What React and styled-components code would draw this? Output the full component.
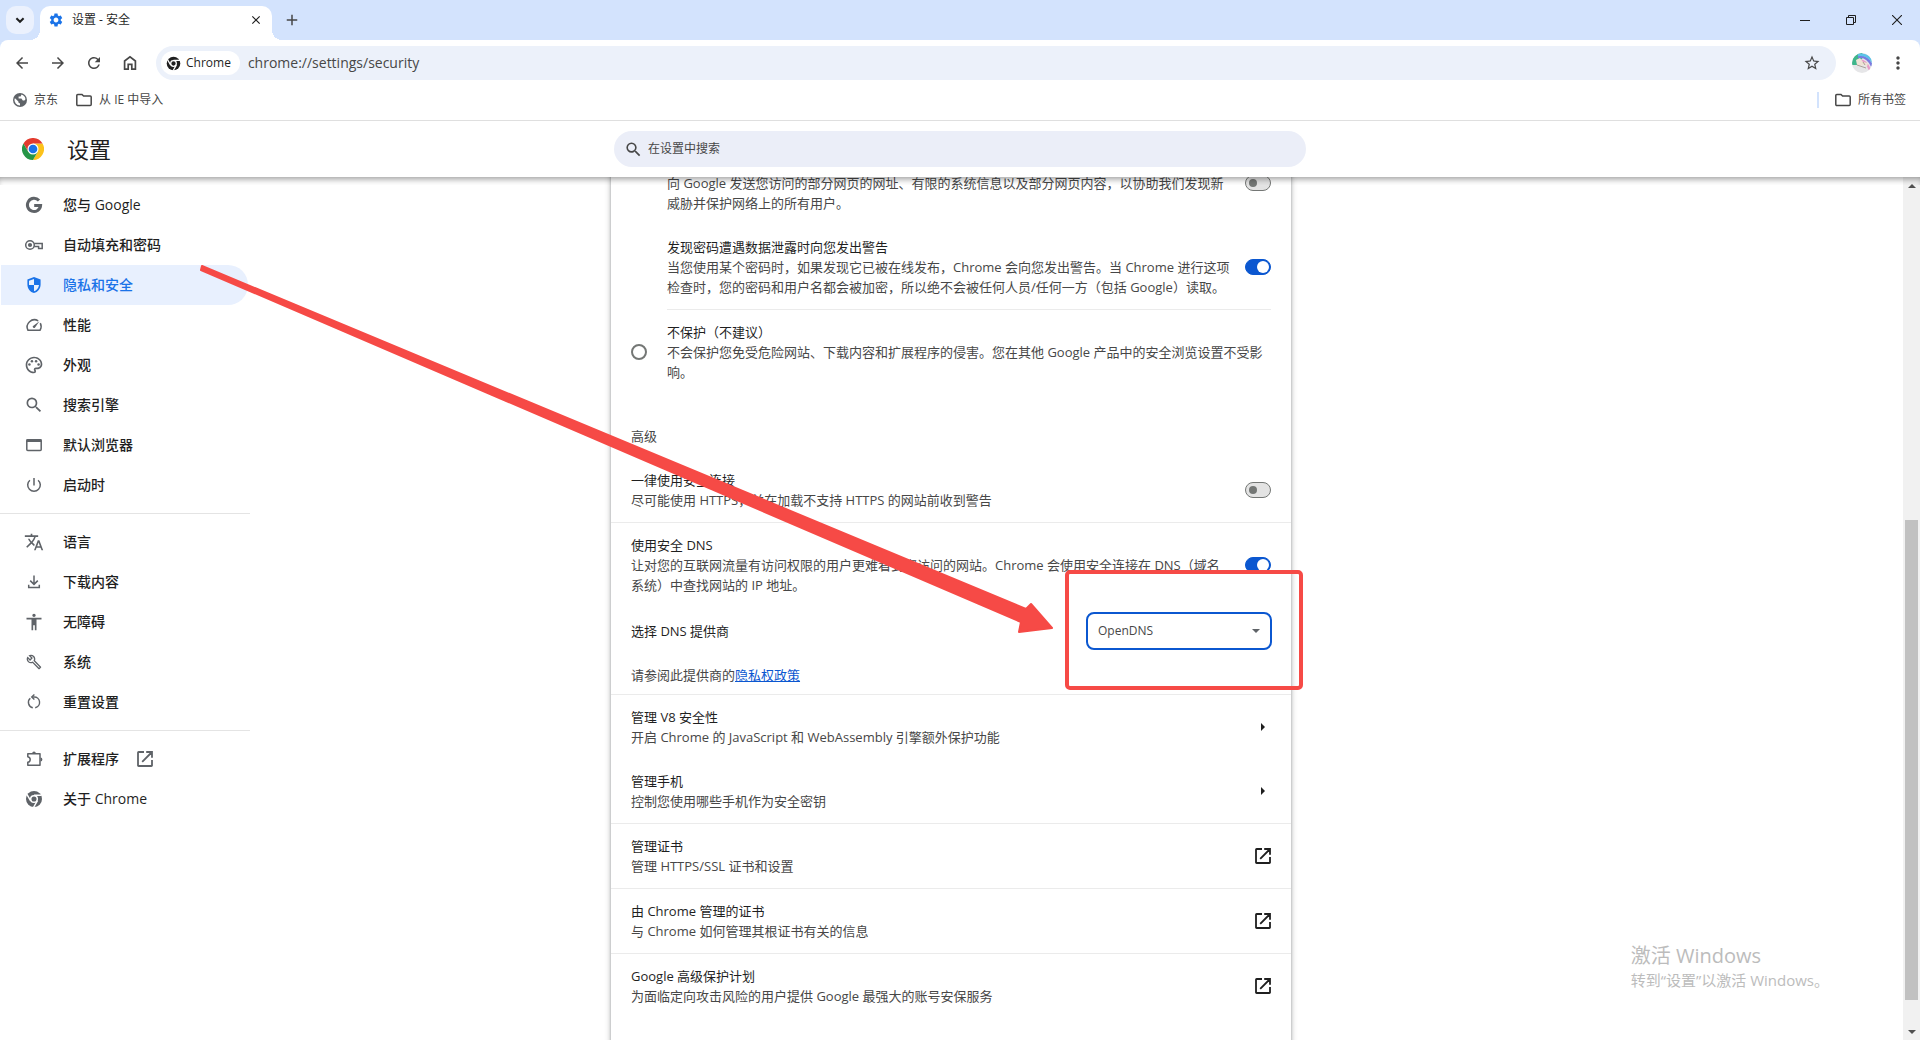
import React from "react";
import styled, { createGlobalStyle, css } from "styled-components";
import {
  MdAccessibility,
  MdAdd,
  MdArrowBack,
  MdArrowForward,
  MdClose,
  MdMoreVert,
  MdOutlineBuild,
  MdOutlinePalette,
  MdRefresh,
  MdSearch,
  MdSettings,
  MdStarBorder,
  MdTranslate,
} from "react-icons/md";

const GlobalStyle = createGlobalStyle`
  *, *::before, *::after { box-sizing: border-box; }
  html, body { margin: 0; padding: 0; }
  body {
    background: #fff;
    color: #1f1f1f;
    font-family: "Open Sans", "Noto Sans CJK SC", sans-serif;
    font-size: 13px;
    line-height: 20px;
    overflow: hidden;
  }
  button, input, select { font: inherit; color: inherit; margin: 0; }
  svg { display: block; flex: none; }
`;

const colors = {
  strip: "#d3e3fd",
  field: "#ecf1fa",
  primary: "#0b57d0",
  icon: "#5f6368",
  toolbarIcon: "#474747",
  secondary: "#474747",
  line: "#ebebeb",
  mark: "#f64a46",
};

const Window = styled.div`
  position: relative;
  height: 100vh;
  display: flex;
  flex-direction: column;
  overflow: hidden;
`;

/* ---------- browser frame ---------- */

const TabStrip = styled.header`
  display: flex;
  align-items: flex-end;
  height: 40px;
  background: ${colors.strip};
  padding-left: 6px;
`;

const PlainButton = styled.button`
  display: grid;
  place-items: center;
  border: 0;
  padding: 0;
  background: transparent;
  cursor: pointer;
`;

const TabSearchButton = styled(PlainButton)`
  align-self: center;
  width: 28px;
  height: 28px;
  border-radius: 10px;
  background: #ebf1fd;
`;

const Tab = styled.div`
  display: flex;
  align-items: center;
  gap: 8px;
  width: 232px;
  height: 34px;
  margin-left: 6px;
  padding: 0 8px 6px;
  background: #fff;
  border-radius: 10px 10px 0 0;
  position: relative;
  font-size: 12px;

  &::before,
  &::after {
    content: "";
    position: absolute;
    bottom: 0;
    width: 10px;
    height: 10px;
  }
  &::before {
    right: 100%;
    background: radial-gradient(circle at 0 0, transparent 10px, #fff 10px);
  }
  &::after {
    left: 100%;
    background: radial-gradient(circle at 100% 0, transparent 10px, #fff 10px);
  }
`;

const TabTitle = styled.span`
  flex: 1;
`;

const TabIconButton = styled(PlainButton)`
  width: 16px;
  height: 16px;
`;

const NewTabButton = styled(PlainButton)`
  align-self: center;
  width: 28px;
  height: 28px;
  margin-left: 6px;
`;

const WindowButtons = styled.div`
  display: flex;
  align-self: stretch;
  margin-left: auto;
`;

const WindowButton = styled(PlainButton)`
  width: 46px;
`;

const ToolbarBack = styled.div`
  background: ${colors.strip};
`;

const Toolbar = styled.div`
  display: flex;
  align-items: center;
  height: 46px;
  padding: 0 4px;
  background: #fff;
  border-radius: 8px 8px 0 0;
  color: ${colors.toolbarIcon};
`;

const NavButton = styled(PlainButton)`
  width: 36px;
  height: 34px;
`;

const Omnibox = styled.div`
  flex: 1;
  display: flex;
  align-items: center;
  height: 34px;
  margin: 0 8px;
  padding: 0 6px 0 5px;
  border-radius: 17px;
  background: ${colors.field};
`;

const SiteChip = styled.button`
  display: flex;
  align-items: center;
  gap: 4px;
  height: 24px;
  padding: 0 9px 0 4px;
  border: 0;
  border-radius: 12px;
  background: #fff;
  color: #1f1f1f;
  font-size: 12px;
`;

const UrlInput = styled.input`
  flex: 1;
  border: 0;
  outline: 0;
  padding: 0 8px;
  background: transparent;
  color: ${colors.secondary};
  font-size: 14px;
`;

const Bookmarks = styled.nav`
  display: flex;
  align-items: center;
  height: 35px;
  padding: 0 14px 6px 13px;
  border-bottom: 1px solid #dfdfdf;
  color: ${colors.toolbarIcon};
`;

const Bookmark = styled.a`
  display: flex;
  align-items: center;
  gap: 7px;
  margin-right: 18px;
  color: ${colors.secondary};
  font-size: 12px;
  text-decoration: none;

  &:last-child {
    margin-right: 0;
  }
`;

const BookmarkDivider = styled.span`
  width: 2px;
  height: 16px;
  margin: 0 16px 0 auto;
  background: ${colors.strip};
`;

/* ---------- settings page ---------- */

const SettingsHeader = styled.header`
  position: relative;
  z-index: 1;
  display: grid;
  grid-template-columns: 1fr 692px 1fr;
  align-items: center;
  height: 56px;
  flex: none;
  background: #fff;

  &::after {
    content: "";
    position: absolute;
    top: 100%;
    left: 0;
    right: 0;
    height: 8px;
    box-shadow: inset 0 5px 6px -3px rgba(0, 0, 0, 0.4);
    pointer-events: none;
  }
`;

const Brand = styled.div`
  display: flex;
  align-items: center;
  gap: 23px;
  padding-left: 22px;
`;

const PageTitle = styled.h1`
  margin: 0;
  font-size: 22px;
  font-weight: 400;
  line-height: 28px;
`;

const SearchBox = styled.label`
  display: flex;
  align-items: center;
  gap: 5px;
  height: 36px;
  padding: 0 10px;
  border-radius: 18px;
  background: #ebeef8;
  color: ${colors.toolbarIcon};
`;

const SearchInput = styled.input`
  flex: 1;
  border: 0;
  outline: 0;
  padding: 0;
  background: transparent;
  font-size: 12px;

  &::placeholder {
    color: ${colors.secondary};
    opacity: 1;
  }
`;

const Body = styled.div`
  flex: 1;
  min-height: 0;
  display: flex;
`;

const Sidebar = styled.nav`
  width: 250px;
  flex: none;
  padding-top: 8px;
`;

const MenuGroup = styled.div`
  padding-bottom: 8px;

  & + & {
    padding-top: 8px;
    border-top: 1px solid #e4e4e4;
  }
`;

const MenuItem = styled.a`
  display: flex;
  align-items: center;
  gap: 18px;
  height: 40px;
  margin: 0 2px 0 1px;
  padding-left: 22px;
  border-radius: 0 20px 20px 0;
  color: #1f1f1f;
  font-size: 14px;
  font-weight: 500;
  text-decoration: none;

  svg {
    color: ${colors.icon};
  }

  ${(p) =>
    p.$selected &&
    css`
      background: #e8f0fe;
      color: #1a73e8;
      svg {
        color: #1a73e8;
      }
    `}
`;

const IconSlot = styled.span`
  display: grid;
  place-items: center;
  width: 22px;
  flex: none;
`;

const Content = styled.main`
  flex: 1;
  min-width: 0;
  overflow: hidden;
  margin-left: -250px;
  padding-right: 1px;
  display: flex;
  justify-content: center;
  pointer-events: none;
`;

const Card = styled.section`
  width: 680px;
  height: 1000px;
  margin-top: -4px;
  background: #fff;
  box-shadow: 0 1px 2px rgba(60, 64, 67, 0.3), 0 1px 5px 1px rgba(60, 64, 67, 0.3);
  pointer-events: auto;
`;

const Row = styled.div`
  display: flex;
  align-items: center;
  gap: 20px;
  margin-left: ${(p) => (p.$nested ? 56 : 0)}px;
  margin-right: ${(p) => (p.$nested ? 20 : 0)}px;
  padding: 12px ${(p) => (p.$nested ? 0 : 20)}px;
  padding-top: ${(p) => (p.$cut ? 0 : 12)}px;
  border-bottom: ${(p) => (p.$line ? 1 : 0)}px solid ${colors.line};
`;

const FieldRow = styled(Row)`
  height: ${(p) => (p.$short ? 40 : 48)}px;
  padding-top: 0;
  padding-bottom: 0;
`;

const TextBlock = styled.div`
  flex: 1;
  min-width: 0;
`;

const Label = styled.label`
  display: block;
  color: #1f1f1f;
`;

const Note = styled.div`
  color: ${colors.secondary};
`;

const Lines = styled.span`
  display: block;
  white-space: nowrap;
`;

const SectionTitle = styled.h2`
  margin: 20px 20px 0;
  font-size: 13px;
  font-weight: 400;
  line-height: 44px;
  color: ${colors.secondary};
`;

const Switch = styled.input.attrs({ type: "checkbox", role: "switch" })`
  appearance: none;
  flex: none;
  display: flex;
  align-items: center;
  width: 26px;
  height: 16px;
  padding: 0 3px;
  border: 1px solid #747775;
  border-radius: 8px;
  background: #e3e3e3;
  align-self: ${(p) => (p.$top ? "flex-start" : "center")};
  margin-top: ${(p) => (p.$top ? 2 : 0)}px;

  &::before {
    content: "";
    width: 8px;
    height: 8px;
    border-radius: 50%;
    background: #747775;
  }
  &:checked {
    justify-content: flex-end;
    padding: 0 1px;
    border-color: ${colors.primary};
    background: ${colors.primary};
  }
  &:checked::before {
    width: 12px;
    height: 12px;
    background: #fff;
  }
`;

const Radio = styled.input.attrs({ type: "radio" })`
  appearance: none;
  flex: none;
  width: 16px;
  height: 16px;
  border: 2px solid #747775;
  border-radius: 50%;
  background: #fff;
`;

const SelectBox = styled.div`
  display: grid;
  grid-template-columns: 1fr 20px;
  align-items: center;
  width: 186px;
  height: 38px;
  margin-right: -1px;

  svg {
    grid-area: 1 / 2;
    margin-right: 12px;
    pointer-events: none;
  }
`;

const Select = styled.select`
  appearance: none;
  grid-area: 1 / 1 / 2 / 3;
  height: 38px;
  padding: 0 10px;
  border: 2px solid ${colors.primary};
  border-radius: 8px;
  background: #fff;
  color: ${colors.secondary};
  font-size: 12px;
`;

const PolicyLink = styled.a`
  color: ${colors.primary};
`;

const RowButton = styled(PlainButton)`
  width: 16px;
  height: 16px;
`;

const Scrollbar = styled.div`
  display: flex;
  flex-direction: column;
  width: 17px;
  flex: none;
  padding: 0 2px;
  background: #f1f1f1;
`;

const ScrollArrow = styled.div`
  display: grid;
  place-items: center;
  height: 17px;
  color: #505050;
`;

const ScrollPart = styled.div`
  flex: ${(p) => p.$size} 1 0;
  background: ${(p) => (p.$thumb ? "#c1c1c1" : "transparent")};
`;

/* ---------- overlays ---------- */

const ActivationNotice = styled.aside`
  position: absolute;
  right: 91px;
  bottom: 49px;
  color: #bcbcbc;
  font-size: 15px;
  line-height: 22px;
`;

const ActivationTitle = styled.div`
  font-size: 20px;
  line-height: 26px;
`;

const Highlight = styled.div`
  position: absolute;
  left: 1065px;
  top: 570px;
  width: 238px;
  height: 120px;
  border: 4px solid ${colors.mark};
  border-radius: 5px;
  pointer-events: none;
`;

const Pointer = styled.svg`
  position: absolute;
  left: 200px;
  top: 260px;
  pointer-events: none;
`;

/* ---------- icons ---------- */

const Glyph = ({ size = 20, box = "0 0 20 20", children }) => (
  <svg width={size} height={size} viewBox={box} fill="none" stroke="currentColor" strokeWidth="1.5" aria-hidden="true">
    {children}
  </svg>
);

const GoogleIcon = () => (
  <Glyph>
    <path d="M15 5.6A6.6 6.6 0 1 0 16.6 10.4H10.2" strokeWidth="3" />
  </Glyph>
);

const KeyIcon = () => (
  <Glyph>
    <circle cx="6" cy="10" r="4.3" />
    <circle cx="6" cy="10" r="2.1" fill="currentColor" stroke="none" />
    <path d="M10.2 8.4H18.2V13.4H14.6V11.6H10.2" />
  </Glyph>
);

const ShieldIcon = () => (
  <Glyph>
    <path
      fill="currentColor"
      stroke="none"
      fillRule="evenodd"
      d="M10 2 3.4 4.6V9.4C3.4 13.6 6.2 17 10 18 13.8 17 16.6 13.6 16.6 9.4V4.6ZM10 3.9V10H15C14.6 13 12.6 15.5 10 16.3V10H5V5.8Z"
    />
  </Glyph>
);

const GaugeIcon = () => (
  <Glyph>
    <path d="M14.2 5.9A7.2 7.2 0 0 0 4 15.3H16A7.2 7.2 0 0 0 16.3 8.2" />
    <path d="M8.7 11.3 15.4 6.2 10.9 12.8A1.5 1.5 0 0 1 8.7 11.3Z" fill="currentColor" stroke="none" />
  </Glyph>
);

const BrowserIcon = () => (
  <Glyph>
    <rect x="2.8" y="4.8" width="14.4" height="10.6" rx="1" />
    <path d="M2.5 5.6H17.5" strokeWidth="2.8" />
  </Glyph>
);

const PowerIcon = () => (
  <Glyph>
    <path d="M10 3V10.4M5.9 5.2A6.3 6.3 0 1 0 14.1 5.2" />
  </Glyph>
);

const DownloadIcon = () => (
  <Glyph>
    <path d="M10 3.6V12M6.2 8.6 10 12.4 13.8 8.6M4.7 12.8V15.6H15.3V12.8" />
  </Glyph>
);

const ResetIcon = () => (
  <Glyph>
    <path d="M6.3 6.3A5.4 5.4 0 0 0 8.8 15.7M11.2 15.7A5.4 5.4 0 0 0 10 5H8" strokeWidth="1.4" />
    <path d="M10.4 2.4 7.7 5 10.4 7.6" strokeWidth="1.4" />
  </Glyph>
);

const PuzzleIcon = () => (
  <Glyph>
    <path d="M3.8 4.7H16V16.3H3.8V13.3Q6.2 12.9 6.2 10.5T3.8 7.7Z" strokeLinejoin="round" />
    <path d="M8.2 4.2A1.8 1.8 0 0 1 11.8 4.2ZM16.5 8.6A1.9 1.9 0 0 1 16.5 12.4Z" fill="currentColor" stroke="none" />
  </Glyph>
);

const LaunchIcon = () => (
  <Glyph size={16} box="0 0 16 16">
    <path d="M7 1H1.6A.6.6 0 0 0 1 1.6V14.4A.6.6 0 0 0 1.6 15H14.4A.6.6 0 0 0 15 14.4V9M9.2 1H15V6.8M15 1 5.2 10.8" strokeWidth="1.8" />
  </Glyph>
);

const ChromeMono = ({ size = 20 }) => (
  <Glyph size={size}>
    <circle cx="10" cy="10" r="8" fill="currentColor" stroke="none" />
    <circle cx="10" cy="10" r="3.3" stroke="#fff" strokeWidth="1.5" />
    <path d="M10 6.2H17.6M6.7 11.9 2.9 5.3M13.3 11.9 9.5 18.5" stroke="#fff" strokeWidth="1.5" />
  </Glyph>
);

const ChromeLogo = () => (
  <svg width="22" height="22" viewBox="0 0 48 48" aria-hidden="true">
    <path fill="#fcc21b" d="M24 12H44.8A24 24 0 0 1 24 48L34.4 30Z" />
    <path fill="#e33b2e" d="M3.2 12A24 24 0 0 1 44.8 12H24L13.6 30Z" />
    <path fill="#269547" d="M3.2 12 13.6 30H34.4L24 48A24 24 0 0 1 3.2 12Z" />
    <circle cx="24" cy="24" r="12" fill="#fff" />
    <circle cx="24" cy="24" r="9.5" fill="#1a73e8" />
  </svg>
);

const ChevronIcon = () => (
  <Glyph size={16} box="0 0 16 16">
    <path d="M4.4 6.2 8 9.8 11.6 6.2" strokeWidth="2" />
  </Glyph>
);

const HomeIcon = () => (
  <Glyph>
    <path d="M4.6 16.2V8L10 3.8 15.4 8V16.2H11.8V11.4H8.2V16.2Z" strokeWidth="1.7" />
  </Glyph>
);

const FolderIcon = () => (
  <Glyph size={16} box="0 0 16 16">
    <path d="M.8 3.4A1 1 0 0 1 1.8 2.4H6L7.6 4H14.2A1 1 0 0 1 15.2 5V12.6A1 1 0 0 1 14.2 13.6H1.8A1 1 0 0 1 .8 12.6Z" />
  </Glyph>
);

const GlobeIcon = () => (
  <Glyph size={14} box="1 1 14 14">
    <circle cx="8" cy="8" r="7" fill="#5f6368" stroke="none" />
    <path
      d="M3 6.2 6.4 9.4V10.6L8 11.6V13.6A5.6 5.6 0 0 1 2.5 7ZM9.5 2.6 8.6 4.4H6.6V6.4H9.4L10.8 8.6H12.4L13.5 7.2A5.6 5.6 0 0 0 9.5 2.6Z"
      fill="#fff"
      stroke="none"
    />
  </Glyph>
);

const Avatar = () => (
  <svg width="20" height="20" viewBox="0 0 20 20" aria-hidden="true">
    <defs>
      <clipPath id="avatar">
        <circle cx="10" cy="10" r="10" />
      </clipPath>
    </defs>
    <g clipPath="url(#avatar)">
      <rect width="20" height="20" fill="#e6e6e8" />
      <path d="M0 12A10 10 0 0 1 10 0L12 3 5 12Z" fill="#3fb68b" />
      <g fill="none" strokeWidth="2.4">
        <path d="M5 8Q13 5 18 17" stroke="#e79bc8" />
        <path d="M6 4Q15 2 20 13" stroke="#7a7be0" />
        <path d="M6 2Q16 0 22 11" stroke="#5cc3e8" />
      </g>
      <path d="M4 7 8 5 11 9 16 10 15 14 12 12 8 13 5 12Z" fill="#efe3d6" />
      <path d="M5 12 14 15M11 9 13 12" stroke="#9b8e86" strokeWidth=".8" />
    </g>
  </svg>
);

const Triangle = ({ points, width, height, color = "currentColor" }) => (
  <svg width={width} height={height} viewBox={`0 0 ${width} ${height}`} aria-hidden="true">
    <polygon points={points} fill={color} />
  </svg>
);

/* ---------- data ---------- */

const menu = [
  [
    { text: "您与 Google", icon: <GoogleIcon /> },
    { text: "自动填充和密码", icon: <KeyIcon /> },
    { text: "隐私和安全", icon: <ShieldIcon />, selected: true },
    { text: "性能", icon: <GaugeIcon /> },
    { text: "外观", icon: <MdOutlinePalette size={20} /> },
    { text: "搜索引擎", icon: <MdSearch size={20} /> },
    { text: "默认浏览器", icon: <BrowserIcon /> },
    { text: "启动时", icon: <PowerIcon /> },
  ],
  [
    { text: "语言", icon: <MdTranslate size={20} /> },
    { text: "下载内容", icon: <DownloadIcon /> },
    { text: "无障碍", icon: <MdAccessibility size={20} /> },
    { text: "系统", icon: <MdOutlineBuild size={16} /> },
    { text: "重置设置", icon: <ResetIcon /> },
  ],
  [
    { text: "扩展程序", icon: <PuzzleIcon />, external: true },
    { text: "关于 Chrome", icon: <ChromeMono /> },
  ],
];

const links = [
  { title: "管理 V8 安全性", note: "开启 Chrome 的 JavaScript 和 WebAssembly 引擎额外保护功能" },
  { title: "管理手机", note: "控制您使用哪些手机作为安全密钥", line: true },
  { title: "管理证书", note: "管理 HTTPS/SSL 证书和设置", external: true, line: true },
  { title: "由 Chrome 管理的证书", note: "与 Chrome 如何管理其根证书有关的信息", external: true, line: true },
  { title: "Google 高级保护计划", note: "为面临定向攻击风险的用户提供 Google 最强大的账号安保服务", external: true },
];

const NoteLines = ({ lines }) => (
  <Note>
    {lines.map((line) => (
      <Lines key={line}>{line}</Lines>
    ))}
  </Note>
);

function BrowserFrame() {
  return (
    <>
      <TabStrip>
        <TabSearchButton aria-label="搜索标签页">
          <ChevronIcon />
        </TabSearchButton>
        <Tab>
          <MdSettings size={16} color="#1a73e8" />
          <TabTitle>设置 - 安全</TabTitle>
          <TabIconButton aria-label="关闭标签页">
            <MdClose size={14} />
          </TabIconButton>
        </Tab>
        <NewTabButton aria-label="新标签页">
          <MdAdd size={18} color="#474747" />
        </NewTabButton>
        <WindowButtons>
          <WindowButton aria-label="最小化">
            <Glyph size={10} box="0 0 10 10"><path d="M0 5.5H10" strokeWidth="1" /></Glyph>
          </WindowButton>
          <WindowButton aria-label="还原">
            <Glyph size={10} box="0 0 10 10">
              <path d="M.5 2.5H7.5V9.5H.5ZM2.5 2.5V.5H9.5V7.5H7.5" strokeWidth="1" />
            </Glyph>
          </WindowButton>
          <WindowButton aria-label="关闭">
            <Glyph size={10} box="0 0 10 10"><path d="M0 0 10 10M10 0 0 10" strokeWidth="1.1" /></Glyph>
          </WindowButton>
        </WindowButtons>
      </TabStrip>
      <ToolbarBack>
        <Toolbar>
          <NavButton aria-label="后退"><MdArrowBack size={18} /></NavButton>
          <NavButton aria-label="前进"><MdArrowForward size={18} /></NavButton>
          <NavButton aria-label="重新加载"><MdRefresh size={18} /></NavButton>
          <NavButton aria-label="主页"><HomeIcon /></NavButton>
          <Omnibox>
            <SiteChip>
              <ChromeMono size={17} />
              Chrome
            </SiteChip>
            <UrlInput aria-label="地址" defaultValue="chrome://settings/security" />
            <NavButton aria-label="收藏"><MdStarBorder size={18} /></NavButton>
          </Omnibox>
          <NavButton aria-label="个人资料"><Avatar /></NavButton>
          <NavButton aria-label="菜单"><MdMoreVert size={20} /></NavButton>
        </Toolbar>
      </ToolbarBack>
      <Bookmarks>
        <Bookmark href="#jd"><GlobeIcon />京东</Bookmark>
        <Bookmark href="#ie"><FolderIcon />从 IE 中导入</Bookmark>
        <BookmarkDivider />
        <Bookmark href="#all"><FolderIcon />所有书签</Bookmark>
      </Bookmarks>
    </>
  );
}

function SecurityCard() {
  return (
    <Card>
      <Row $nested $cut>
        <TextBlock>
          <NoteLines
            lines={[
              "向 Google 发送您访问的部分网页的网址、有限的系统信息以及部分网页内容，以协助我们发现新",
              "威胁并保护网络上的所有用户。",
            ]}
          />
        </TextBlock>
        <Switch $top aria-label="协助改进安全性" />
      </Row>
      <Row $nested $line>
        <TextBlock>
          <Label htmlFor="leak">发现密码遭遇数据泄露时向您发出警告</Label>
          <NoteLines
            lines={[
              "当您使用某个密码时，如果发现它已被在线发布，Chrome 会向您发出警告。当 Chrome 进行这项",
              "检查时，您的密码和用户名都会被加密，所以绝不会被任何人员/任何一方（包括 Google）读取。",
            ]}
          />
        </TextBlock>
        <Switch id="leak" defaultChecked />
      </Row>
      <Row>
        <Radio id="none" name="protection" />
        <TextBlock>
          <Label htmlFor="none">不保护（不建议）</Label>
          <NoteLines
            lines={[
              "不会保护您免受危险网站、下载内容和扩展程序的侵害。您在其他 Google 产品中的安全浏览设置不受影",
              "响。",
            ]}
          />
        </TextBlock>
      </Row>
      <SectionTitle>高级</SectionTitle>
      <Row $line>
        <TextBlock>
          <Label htmlFor="https">一律使用安全连接</Label>
          <Note>尽可能使用 HTTPS，并在加载不支持 HTTPS 的网站前收到警告</Note>
        </TextBlock>
        <Switch id="https" />
      </Row>
      <Row>
        <TextBlock>
          <Label htmlFor="dns">使用安全 DNS</Label>
          <NoteLines
            lines={[
              "让对您的互联网流量有访问权限的用户更难看到您访问的网站。Chrome 会使用安全连接在 DNS（域名",
              "系统）中查找网站的 IP 地址。",
            ]}
          />
        </TextBlock>
        <Switch id="dns" defaultChecked />
      </Row>
      <FieldRow>
        <TextBlock>
          <Label htmlFor="provider">选择 DNS 提供商</Label>
        </TextBlock>
        <SelectBox>
          <Select id="provider" defaultValue="OpenDNS">
            <option>OpenDNS</option>
          </Select>
          <Triangle width={8} height={4} points="0,0 8,0 4,4" color={colors.icon} />
        </SelectBox>
      </FieldRow>
      <FieldRow $short $line>
        <Note>
          请参阅此提供商的<PolicyLink href="#policy">隐私权政策</PolicyLink>
        </Note>
      </FieldRow>
      {links.map((item) => (
        <Row key={item.title} $line={item.line}>
          <TextBlock>
            <Label as="div">{item.title}</Label>
            <Note>{item.note}</Note>
          </TextBlock>
          <RowButton aria-label={item.title}>
            {item.external ? <LaunchIcon /> : <Triangle width={4} height={8} points="0,0 4,4 0,8" />}
          </RowButton>
        </Row>
      ))}
    </Card>
  );
}

export default function App() {
  return (
    <Window>
      <GlobalStyle />
      <BrowserFrame />
      <SettingsHeader>
        <Brand>
          <ChromeLogo />
          <PageTitle>设置</PageTitle>
        </Brand>
        <SearchBox>
          <MdSearch size={19} />
          <SearchInput type="search" placeholder="在设置中搜索" aria-label="在设置中搜索" />
        </SearchBox>
      </SettingsHeader>
      <Body>
        <Sidebar>
          {menu.map((group, index) => (
            <MenuGroup key={index}>
              {group.map((item) => (
                <MenuItem key={item.text} href="#menu" $selected={item.selected}>
                  <IconSlot>{item.icon}</IconSlot>
                  {item.text}
                  {item.external && <LaunchIcon />}
                </MenuItem>
              ))}
            </MenuGroup>
          ))}
        </Sidebar>
        <Content>
          <SecurityCard />
        </Content>
        <Scrollbar>
          <ScrollArrow>
            <Triangle width={8} height={4} points="0,4 4,0 8,4" />
          </ScrollArrow>
          <ScrollPart $size={326} />
          <ScrollPart $size={480} $thumb />
          <ScrollPart $size={23} />
          <ScrollArrow>
            <Triangle width={8} height={4} points="0,0 8,0 4,4" />
          </ScrollArrow>
        </Scrollbar>
      </Body>
      <ActivationNotice>
        <ActivationTitle>激活 Windows</ActivationTitle>
        转到“设置”以激活 Windows。
      </ActivationNotice>
      <Pointer width="860" height="380" viewBox="200 260 860 380" aria-hidden="true">
        <path
          d="M202 266 1026 609 1031 604 1052 628 1019 632 1021 622 201 270Z"
          fill={colors.mark}
          stroke={colors.mark}
          strokeWidth="2"
          strokeLinejoin="round"
        />
      </Pointer>
      <Highlight />
    </Window>
  );
}
